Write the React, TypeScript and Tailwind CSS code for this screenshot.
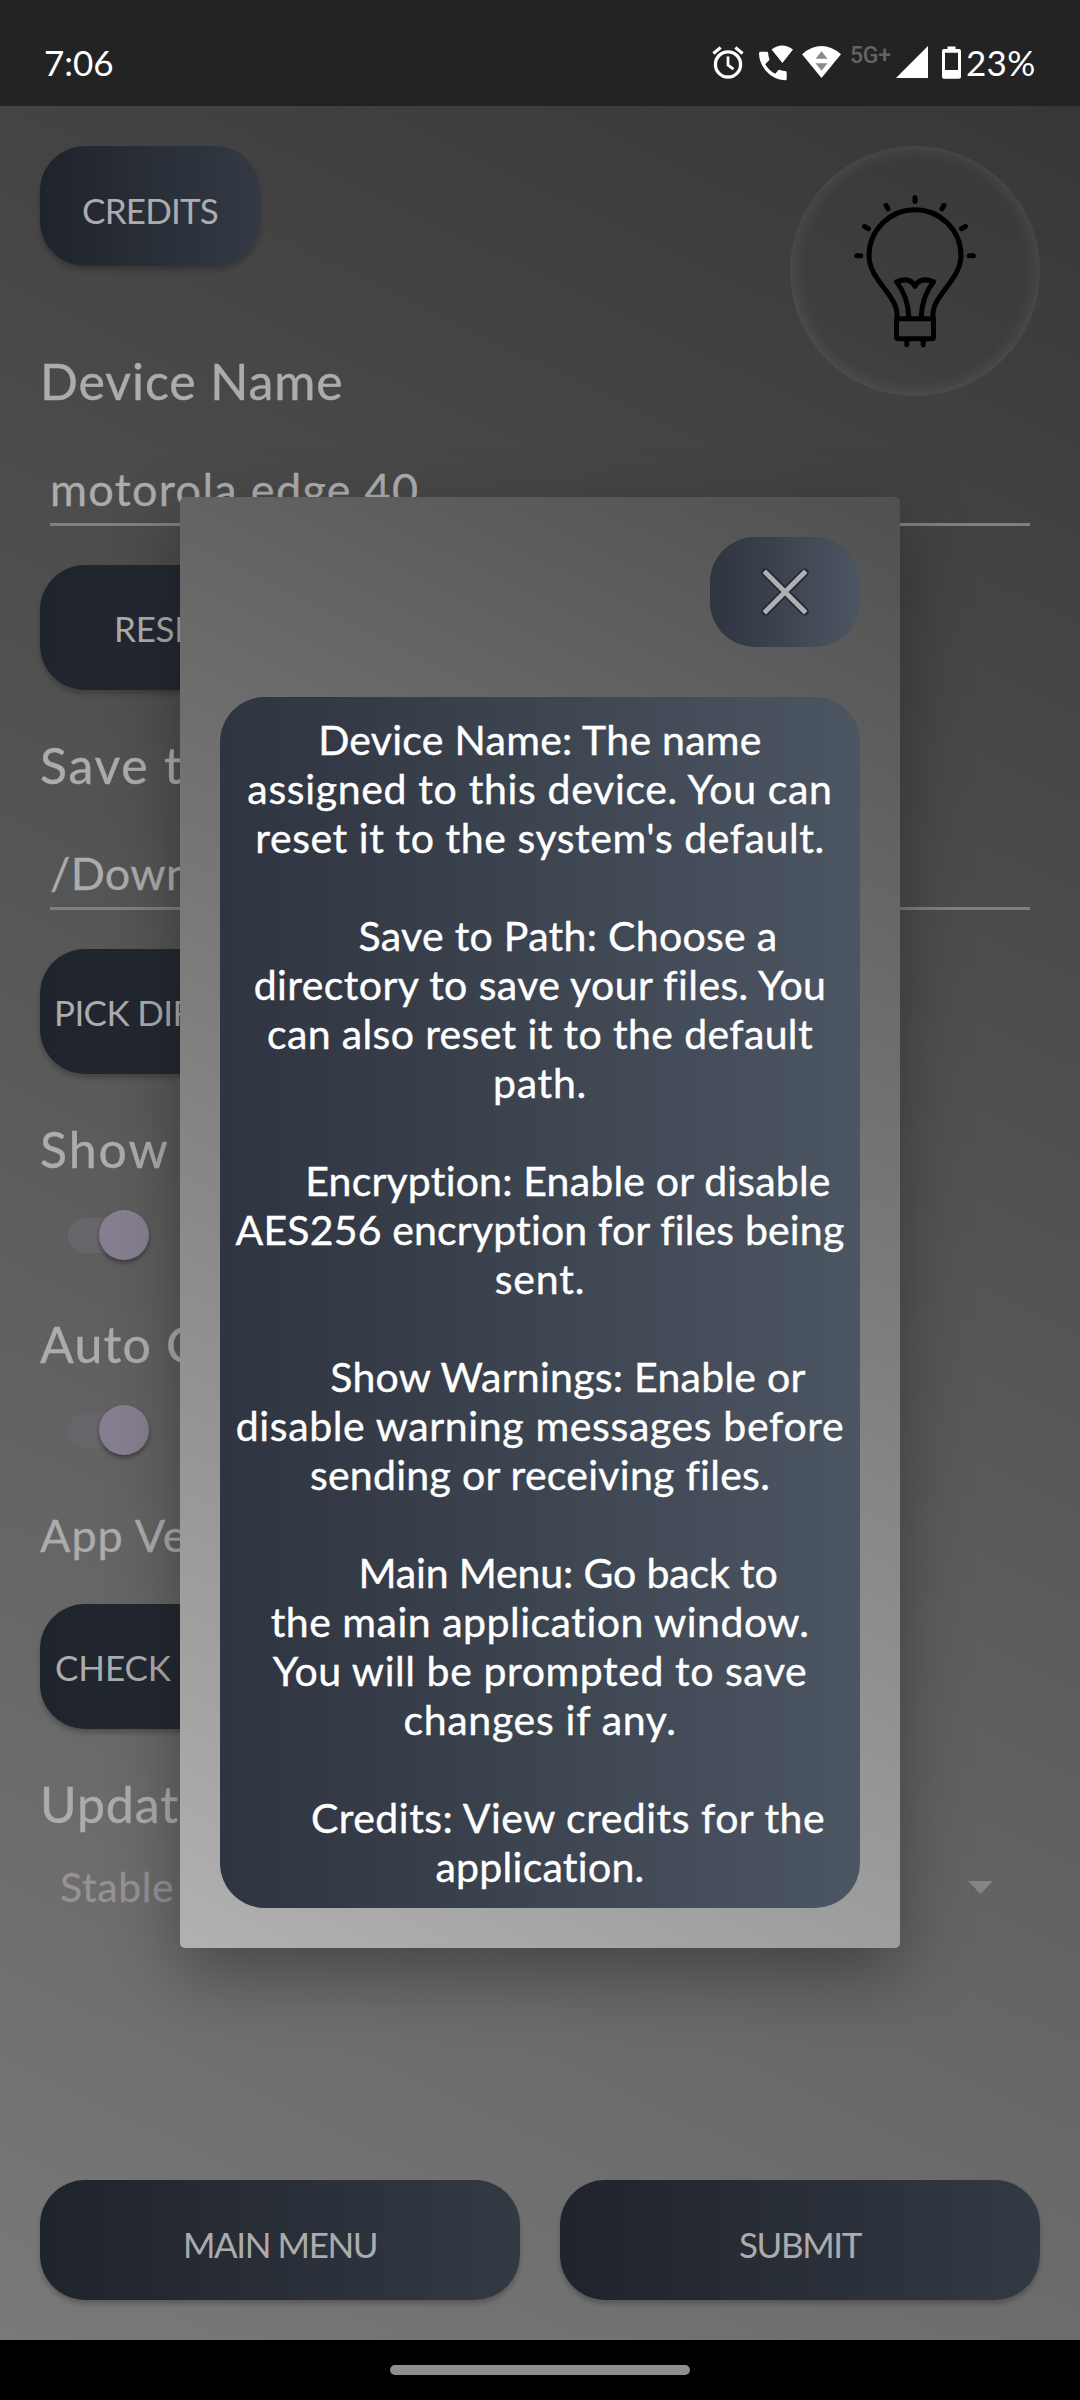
import type { ReactNode } from 'react';

type Line = { text: string; cls: string };

const HELP: Line[][] = [
  [
    { text: 'Device Name: The name', cls: 'tracking-[0.27px]' },
    { text: 'assigned to this device. You can', cls: 'tracking-[0.66px]' },
    { text: "reset it to the system's default.", cls: 'tracking-[0.56px]' },
  ],
  [
    { text: 'Save to Path: Choose a', cls: 'pl-14 tracking-[0.3px]' },
    { text: 'directory to save your files. You', cls: 'tracking-[0.4px]' },
    { text: 'can also reset it to the default', cls: 'tracking-[0.36px]' },
    { text: 'path.', cls: 'tracking-[0.7px]' },
  ],
  [
    { text: 'Encryption: Enable or disable', cls: 'pl-14 tracking-[0.19px]' },
    { text: 'AES256 encryption for files being', cls: 'tracking-[0.16px]' },
    { text: 'sent.', cls: 'tracking-[0.8px]' },
  ],
  [
    { text: 'Show Warnings: Enable or', cls: 'pl-14 tracking-[0.26px]' },
    { text: 'disable warning messages before', cls: 'tracking-[0.64px]' },
    { text: 'sending or receiving files.', cls: 'tracking-[0.28px]' },
  ],
  [
    { text: 'Main Menu: Go back to', cls: 'pl-14 tracking-[-0.15px]' },
    { text: 'the main application window.', cls: 'tracking-[0.5px]' },
    { text: 'You will be prompted to save', cls: 'tracking-[0.57px]' },
    { text: 'changes if any.', cls: 'tracking-[0.7px]' },
  ],
  [
    { text: 'Credits: View credits for the', cls: 'pl-14 tracking-[0.48px]' },
    { text: 'application.', cls: 'tracking-[0.26px]' },
  ],
];

function Pill({ className, children }: { className: string; children: ReactNode }) {
  return (
    <button
      className={`flex items-center whitespace-nowrap rounded-[45px] bg-linear-to-r from-[#1f232b] to-[#333a44] text-[35px] text-[#acacac] shadow-[0_4px_5px_rgba(0,0,0,0.22)] ${className}`}
    >
      {children}
    </button>
  );
}

function Label({ className, children }: { className: string; children: ReactNode }) {
  return (
    <div
      className={`h-[60px] whitespace-nowrap pt-px text-[50px] leading-[60px] [-webkit-text-stroke:0.4px_#acacac] ${className}`}
    >
      {children}
    </div>
  );
}

function Field({ className, children }: { className: string; children: ReactNode }) {
  return (
    <div className="mx-2.5 mt-[52px] border-b-[3px] border-[#807d84] pb-[7px]">
      <div
        className={`h-[54px] whitespace-nowrap text-[45px] leading-[54px] [-webkit-text-stroke:0.3px_#acacac] ${className}`}
      >
        {children}
      </div>
    </div>
  );
}

function Toggle() {
  return (
    <div className="mt-8 ml-7 flex h-[50px] w-[82px] shrink-0 items-center">
      <div className="flex h-[35px] w-[81px] items-center justify-end rounded-full bg-[#68656a]">
        <div className="h-[50px] w-[50px] shrink-0 rounded-full bg-[#867f91] shadow-[0_3px_4px_rgba(0,0,0,0.35)]" />
      </div>
    </div>
  );
}

function StatusBar() {
  return (
    <header className="flex h-[106px] shrink-0 items-start bg-[#232323] text-white">
      <div className="mt-[41px] ml-[44px] text-[35px] leading-[42px]">7:06</div>
      <svg className="mt-[46px] ml-auto h-[33px] w-[32px]" viewBox="0 0 32 33" fill="none" stroke="white">
        <circle cx="16" cy="18.4" r="12.6" strokeWidth="3.3" />
        <path d="M16 10.5v8.5l5.5 4.2" strokeWidth="2.8" />
        <path d="M1.4 7.6 8.6 1.6M30.6 7.6 23.4 1.6" strokeWidth="3.2" />
      </svg>
      <svg className="mt-[45px] ml-[15px] h-[36px] w-[34px]" viewBox="0 0 34 36" fill="white">
        <path d="M1.5 6.8h6.2q1.4 0 1.5 1.4.1 3 1.1 5.6.3 1-.4 1.8l-3.7 3.6q4.2 6.8 10 9.6l3-3.5q.8-.8 1.8-.4 2.5.9 5.3 1.1 1.4.1 1.4 1.5v6.3q0 1.5-1.5 1.5Q14.5 34.6 7 26 0 17.6 0 8.3 0 6.8 1.5 6.8Z" />
        <path d="M12.6 4.4Q23 -3.2 34 4.4L23.4 18Z" />
      </svg>
      <svg className="mt-[46px] ml-[9px] h-[32px] w-[39px]" viewBox="0 0 39 32">
        <path d="M0 8.2Q19.5 -8 39 8.2L19.5 32Z" fill="white" />
        <path d="M13.5 12.7h12l-6-7.5ZM13.5 17.2h12l-6 7.5Z" fill="#8a8a8a" />
      </svg>
      <div className="mt-[42px] ml-[9px] w-[41px] whitespace-nowrap font-['Roboto'] text-[23px] leading-[28px] font-medium tracking-[-0.3px] text-[#636363]">
        5G+
      </div>
      <svg className="mt-[46px] ml-[5px] h-[32px] w-[32px]" viewBox="0 0 32 32">
        <path d="M0 32 32 0V32Z" fill="white" />
      </svg>
      <svg className="mt-[46px] ml-[14px] h-[33px] w-[19px]" viewBox="0 0 19 33">
        <path
          fillRule="evenodd"
          fill="white"
          d="M5.5 3V.6h8V3H17q2 0 2 2v25.7q0 2-2 2H2q-2 0-2-2V5q0-2 2-2ZM3 6.7V24h13V6.7Z"
        />
      </svg>
      <div className="mt-[41px] mr-[44px] ml-[5px] w-[70px] whitespace-nowrap text-[35px] leading-[42px] tracking-[0.3px]">
        23%
      </div>
    </header>
  );
}

function Bulb() {
  return (
    <div className="flex h-[250px] w-[250px] items-center justify-center rounded-full shadow-[inset_0_0_18px_rgba(255,255,255,0.13)]">
      <svg
        className="h-[156px] w-[124px]"
        viewBox="0 -5.3 124 156"
        fill="none"
        stroke="black"
        strokeWidth="5"
        strokeLinecap="round"
        strokeLinejoin="round"
      >
        <path d="M44 122V116Q44 108 37 98L25 81.5Q16 69 16 57.5A46 46 0 0 1 108 57.5Q108 69 99 81.5L87 98Q80 108 80 116V122" />
        <path d="M43.5 120.5H80.5V138.5Q80.5 140.5 78.5 140.5H45.5Q43.5 140.5 43.5 138.5Z" />
        <path d="M55.8 119Q55 98 43.5 83.5Q57 78 62 88Q67 78 80.5 83.5Q69 98 68.2 119" />
        <path d="M53.8 142v4.5M70.2 142v4.5M62 -.8v4M33 7l2 3.5M91 7l-2 3.5M11.5 28.2l4 2.2M112.5 28.2l-4 2.2M3.8 57.4h4M116.3 57.4h4" />
      </svg>
    </div>
  );
}

function HelpDialog() {
  return (
    <section
      role="dialog"
      className="absolute top-[497px] left-[180px] flex h-[1451px] w-[720px] flex-col items-end rounded-[5px] bg-[linear-gradient(206.4deg,#505050,#b1b1b1)] p-10 shadow-[0_26px_68px_rgba(0,0,0,0.34)]"
    >
      <button
        aria-label="Close"
        className="flex h-[110px] w-[150px] shrink-0 items-center justify-center rounded-[45px] bg-linear-to-r from-[#2e3440] to-[#4c5662]"
      >
        <svg className="h-[52px] w-[52px]" viewBox="0 0 52 52" strokeLinecap="square">
          <path d="M6.5 6.5 45.5 45.5M45.5 6.5 6.5 45.5" stroke="#262b34" strokeWidth="8.5" strokeLinecap="round" />
          <path d="M7 7 45 45M45 7 7 45" stroke="#aeb0b5" strokeWidth="4.8" />
        </svg>
      </button>
      <div className="mt-[50px] flex h-[1211px] w-full flex-col gap-[49px] rounded-[45px] bg-linear-to-r from-[#2e3440] to-[#4c5662] pt-[18px] text-center text-[41px] leading-[49px] text-white [-webkit-text-stroke:0.4px_white]">
        {HELP.map((lines) => (
          <div key={lines[0].text}>
            {lines.map((line) => (
              <div key={line.text} className={`h-[49px] whitespace-nowrap ${line.cls}`}>
                {line.text}
              </div>
            ))}
          </div>
        ))}
      </div>
    </section>
  );
}

export default function App() {
  return (
    <div className="relative flex h-[2400px] w-[1080px] flex-col overflow-hidden font-['Lato',sans-serif]">
      <StatusBar />
      <main className="flex flex-1 flex-col bg-[linear-gradient(205.8deg,#373737,#797979)] p-10 text-[#acacac]">
        <div className="flex items-start justify-between">
          <div>
            <Pill className="h-[120px] w-[220px] justify-center pt-[8px] tracking-[-0.8px]">CREDITS</Pill>
            <Label className="mt-[84px] tracking-[0.9px]">Device Name</Label>
          </div>
          <Bulb />
        </div>
        <Field className="tracking-[1.3px]">motorola edge 40</Field>
        <Pill className="mt-[39px] h-[125px] w-[480px] pt-px pl-[74px] tracking-[-0.3px]">RESET</Pill>

        <Label className="mt-11 tracking-[1.7px]">Save to Path</Label>
        <Field className="tracking-[0.3px]">/Download</Field>
        <Pill className="mt-[39px] h-[125px] w-[480px] pt-px pl-[14px] tracking-[-0.6px]">PICK DIRECTORY</Pill>

        <Label className="mt-11 tracking-[2px]">Show Warnings</Label>
        <Toggle />
        <Label className="mt-[53px] tracking-[1.2px]">Auto Check</Label>
        <Toggle />

        <div className="mt-[53px] h-[54px] text-[45px] leading-[54px] tracking-[1px] [-webkit-text-stroke:0.3px_#acacac]">
          App Version
        </div>
        <Pill className="mt-[42px] h-[125px] w-[480px] pt-px pl-[15px] tracking-[-0.1px]">CHECK FOR UPDATES</Pill>

        <Label className="mt-11 tracking-[0.9px]">Update Channel</Label>
        <div className="mt-[30px] flex h-12 items-center justify-between pr-[47px] pl-5 text-[41px] leading-[48px] tracking-[0.6px] text-[#979198] [-webkit-text-stroke:0.3px_#979198]">
          Stable
          <svg className="h-[13px] w-[25px]" viewBox="0 0 25 13">
            <path d="M0 0H25L12.5 13Z" fill="#86838a" />
          </svg>
        </div>

        <div className="mt-auto grid grid-cols-2 gap-10">
          <Pill className="h-[120px] justify-center pt-[8px] tracking-[-1.4px]">MAIN MENU</Pill>
          <Pill className="h-[120px] justify-center pt-[8px] tracking-[-1.4px]">SUBMIT</Pill>
        </div>
      </main>
      <footer className="flex h-[60px] shrink-0 items-center justify-center bg-black">
        <div className="h-2.5 w-[300px] rounded-full bg-[#8e8e8e]" />
      </footer>
      <HelpDialog />
    </div>
  );
}
